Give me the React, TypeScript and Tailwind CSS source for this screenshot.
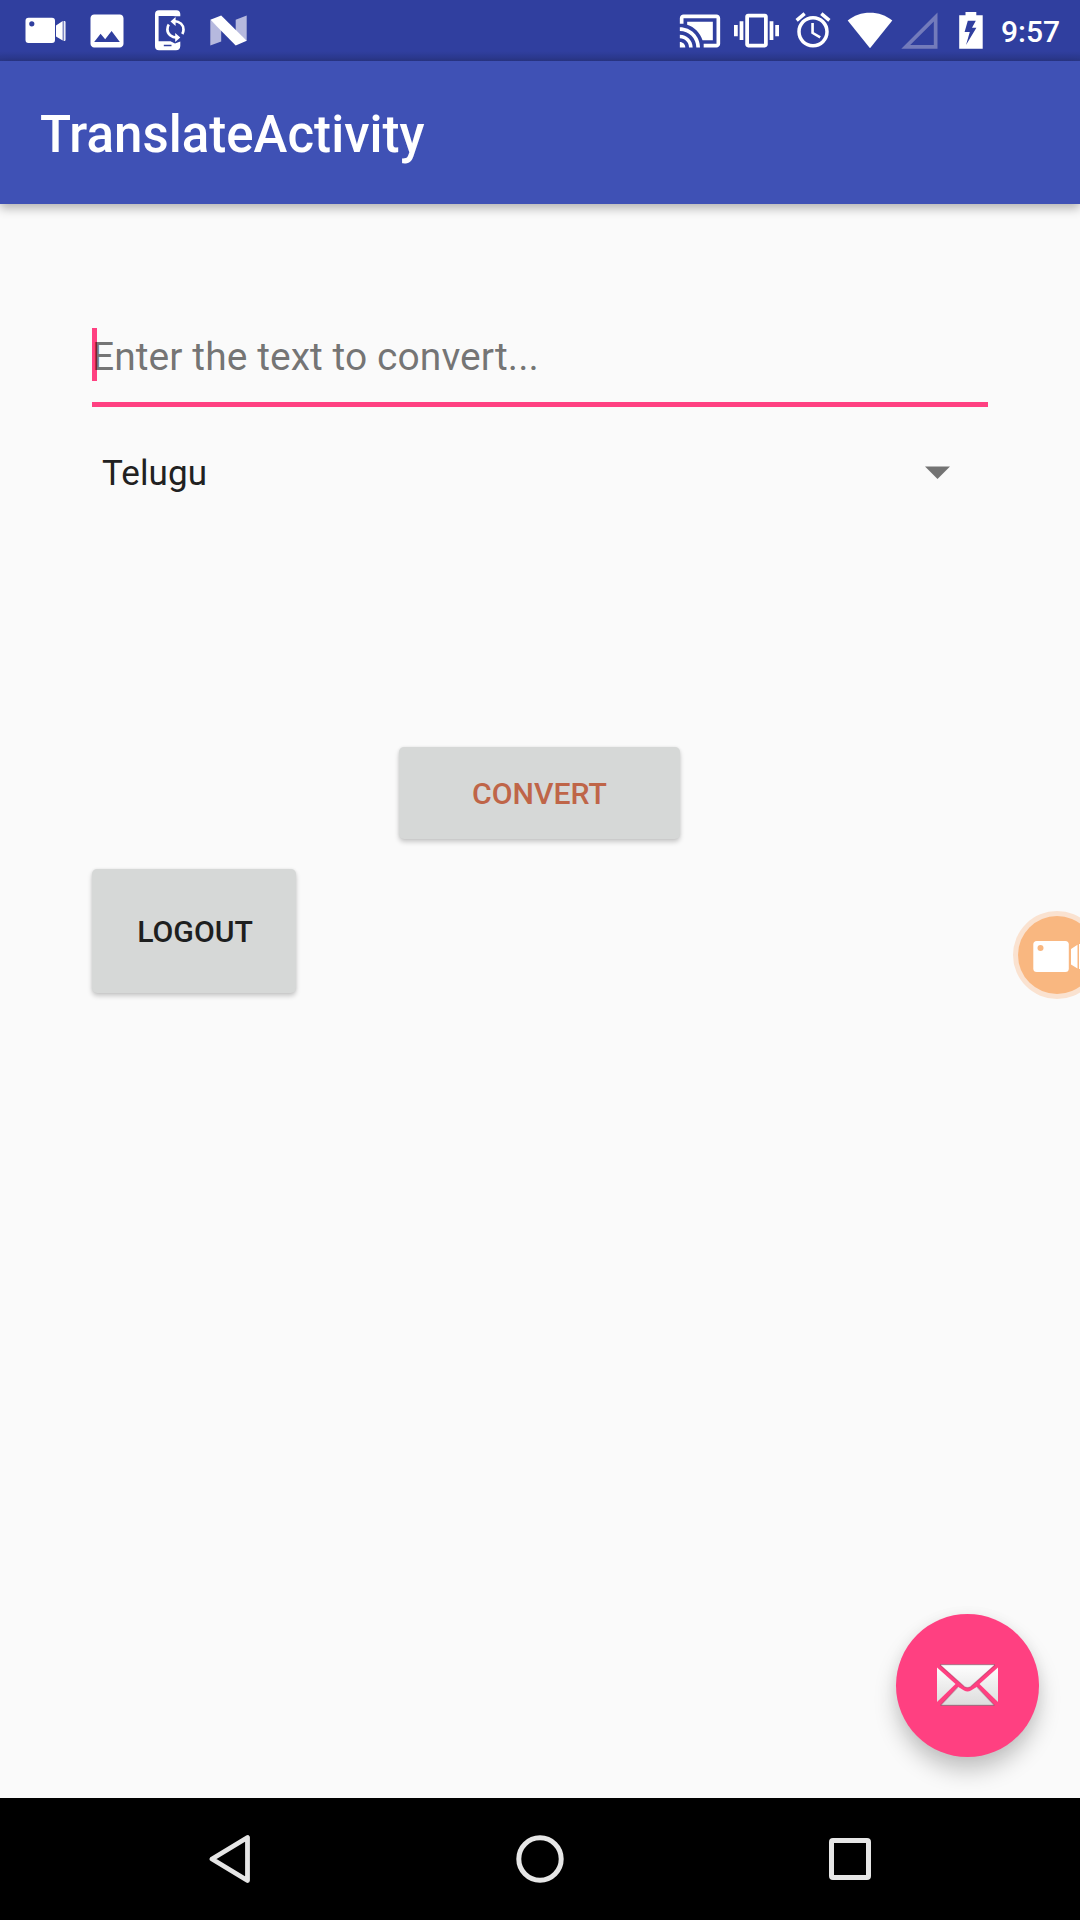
import React from "react";
import { MdAlarm, MdCastConnected, MdImage, MdVibration } from "react-icons/md";

function VideoIcon() {
  return (
    <svg className="ml-[25px] mt-[17px] h-[27px] w-[42px] shrink-0" viewBox="0 0 42 27" fill="#fff">
      <path
        fillRule="evenodd"
        d="M3.500 .8H27a3 3 0 0 1 3 3V23a3 3 0 0 1-3 3H3.500a3 3 0 0 1-3-3V3.800a3 3 0 0 1 3-3ZM6.800 4.200a2.600 2.600 0 1 0 0 5.200a2.600 2.600 0 0 0 0-5.200Z"
      />
      <path d="M31 8.500 37.700 4V23.500L31 19.500ZM38.600 4H39.900V24H38.600ZM40.400 4.500H40.900V23.500H40.400Z" />
    </svg>
  );
}

function PhoneSyncIcon() {
  return (
    <svg className="ml-[26px] mt-[10px] h-[41px] w-[32px] shrink-0" viewBox="0 0 32 41" fill="#fff">
      <path
        fillRule="evenodd"
        d="M4 .2H21.500A4 4 0 0 1 25.300 4V6.300H20.500L18 5.900H3.600V31.200H15.500L20 33.500L25.300 31.500V36A4.500 4.500 0 0 1 21 40.300H4A4 4 0 0 1 0 36.300V4.200A4 4 0 0 1 4 .2ZM8.800 34.800V36.300H16.500V34.800Z"
      />
      <path d="M19 11C25 11.500 28.500 15 28.500 19.700C28.500 21.500 28 22.800 27.300 24" fill="none" stroke="#fff" strokeWidth="2.700" />
      <path d="M13.800 14.500C12.700 16 12.400 17.700 12.400 19.500C12.400 24 16.500 27.400 22 27.600" fill="none" stroke="#fff" strokeWidth="2.700" />
      <path d="M15.500 11.500 20.600 7V16ZM25.300 27.500 20.200 23V32Z" />
    </svg>
  );
}

function NougatIcon() {
  return (
    <svg className="ml-[23px] mt-[15px] h-[31px] w-[37px] shrink-0" viewBox="0 0 37 31">
      <path d="M.3 5V30.500L11.200 26.500V14ZM36.700 .5 25.700 4.800V17L36.700 26Z" fill="#b6b9de" />
      <path d="M.3 4.800 11.200 .5 36.700 25.800 25.700 30.500Z" fill="#fff" />
    </svg>
  );
}

function WifiIcon() {
  return (
    <svg className="ml-[13px] mt-[12px] h-[37px] w-[46px] shrink-0" viewBox="0 0 46 37" fill="#fff">
      <path d="M23 36.300.7 8.500C7 3.300 14.500.7 23 .7S39 3.300 45.300 8.500Z" />
    </svg>
  );
}

function SignalIcon() {
  return (
    <svg className="ml-[8px] mt-[12px] h-[37px] w-[37px] shrink-0" viewBox="0 0 37 37" fill="#737bbb">
      <path fillRule="evenodd" d="M36.500 .5V36.700H.3ZM32.800 9.400V33H9.200Z" />
    </svg>
  );
}

function BatteryIcon() {
  return (
    <svg className="ml-[21px] mt-[12px] h-[37px] w-[24px] shrink-0" viewBox="0 0 24 37">
      <path d="M6.500 0H17.300V3.300H23.700V36.700H.2V3.300H6.500Z" fill="#fff" />
      <path d="M16.800 8.800H8.800L5.600 19.900H10.800L7 33 17.400 15.800H13Z" fill="#303f9f" />
    </svg>
  );
}

function StatusBar() {
  return (
    <div className="flex h-[61px] items-start bg-[linear-gradient(to_bottom,#303f9f_0,#303f9f_51px,#2a3789_61px)]">
      <VideoIcon />
      <MdImage size={44} color="#fff" className="ml-[17.500px] mt-[8.500px] shrink-0" />
      <PhoneSyncIcon />
      <NougatIcon />
      <div className="flex-1" />
      <MdCastConnected size={44} color="#fff" className="mt-[8.500px] shrink-0" />
      <MdVibration size={45} color="#fff" className="ml-[12px] mt-[8px] shrink-0" />
      <MdAlarm size={42} color="#fff" className="ml-[13px] mt-[9px] shrink-0" />
      <WifiIcon />
      <SignalIcon />
      <BatteryIcon />
      <div className="ml-[18px] mr-[20px] mt-[12px] w-[59px] whitespace-nowrap text-[30px] font-medium leading-[40px] text-white">9:57</div>
    </div>
  );
}

function CaptureBubble() {
  return (
    <div className="absolute left-[1013px] top-[707px] h-[88px] w-[67px] overflow-hidden">
      <svg className="h-[88px] w-[88px]" viewBox="0 0 88 88">
        <circle cx="44" cy="44" r="44" fill="#fae2d0" />
        <circle cx="44" cy="44" r="39" fill="#f9b780" />
        <rect x="20.300" y="30" width="35.500" height="31" rx="3.500" fill="#fff" />
        <circle cx="27.500" cy="37" r="3" fill="#f9b780" />
        <path d="M58 38 64.500 33.700V57.500L58 53.500ZM66 33H70V58H66Z" fill="#fff" />
      </svg>
    </div>
  );
}

function MailButton() {
  return (
    <button className="absolute bottom-[41px] right-[41px] flex h-[143px] w-[143px] items-center justify-center rounded-full bg-[#ff4081] shadow-[0_14px_22px_rgba(0,0,0,0.21),0_1px_14px_rgba(0,0,0,0.05)]">
      <svg className="mt-[-1px] h-[42px] w-[61px]" viewBox="0 0 61 42">
        <defs>
          <linearGradient id="paper" x1="0" y1="0" x2="0" y2="42" gradientUnits="userSpaceOnUse">
            <stop offset="0" stopColor="#fff" />
            <stop offset="1" stopColor="#dcdcdc" />
          </linearGradient>
        </defs>
        <g fill="url(#paper)">
          <path d="M3 .5H58L34 22.200Q30.500 25 27 22.200Z" />
          <path d="M0 3.500 18.500 20 0 38Z" />
          <path d="M61 3.500 42.500 20 61 38Z" />
          <path d="M3.500 41.500 21 22.800L27 26.500Q30.500 28.300 34 26.500L40 22.800L57.500 41.500Z" />
        </g>
        <path d="M3.500 41.300H57.500M3 .6H58" stroke="#000" strokeOpacity=".28" strokeWidth="1.200" />
        <path d="M3 1 27 22.200Q30.500 25 34 22.200L58 1M4 41 21 23M57 41 40 23" fill="none" stroke="#803050" strokeOpacity=".3" strokeWidth="1.200" />
      </svg>
    </button>
  );
}

const raised =
  "flex items-center justify-center rounded-[5px] bg-[#d6d8d7] pt-[2px] text-[30.200px] font-medium leading-[36px] shadow-[0_3px_5px_rgba(0,0,0,0.2),0_0_3px_rgba(0,0,0,0.07)]";

export default function App() {
  return (
    <div className="flex h-[1920px] w-[1080px] flex-col overflow-hidden bg-[#fafafa] font-[Roboto,sans-serif]">
      <StatusBar />
      <header className="relative z-10 flex h-[143px] shrink-0 items-center bg-[#3f51b5] pl-[40px] pt-[5px] shadow-[0_4px_10px_rgba(0,0,0,0.3)]">
        <h1 className="whitespace-nowrap text-[51px] font-medium leading-[60px] tracking-[0.03px] text-white">TranslateActivity</h1>
      </header>

      <main className="relative flex flex-1 flex-col px-[92px] pt-[124px]">
        <div className="flex h-[79px] items-start border-b-[5px] border-[#ff4081]">
          <div className="h-[53px] w-[5px] bg-[#ff4081]" />
          <div className="relative ml-[-5px] mt-[3px] whitespace-nowrap text-[39px] leading-[53px] tracking-[0.05px] text-black/55">Enter the text to convert...</div>
        </div>
        <div className="mt-[39px] flex h-[52px] items-center justify-between pl-[10px] pr-[38px]">
          <span className="pt-[4px] text-[35px] leading-[52px] tracking-[0.1px] text-[#212121]">Telugu</span>
          <svg className="h-[13px] w-[25px]" viewBox="0 0 25 13">
            <path d="M0 .5H25L12.500 13Z" fill="#737373" />
          </svg>
        </div>
        <button className={`${raised} ml-[307px] mt-[249px] h-[92px] w-[281px] text-[#bf6548]`}>CONVERT</button>
        <button className={`${raised} mt-[30px] h-[124px] w-[204px] pl-[2px] text-[#1e1f1f]`}>LOGOUT</button>
        <CaptureBubble />
        <MailButton />
      </main>

      <nav className="relative z-10 flex h-[122px] shrink-0 items-center bg-black pl-[209px]">
        <svg className="h-[50px] w-[42px]" viewBox="0 0 42 50">
          <path d="M38.500 3.500V46.500L3 25Z" fill="none" stroke="#e6e6e6" strokeWidth="4.800" strokeLinejoin="round" />
        </svg>
        <svg className="ml-[265px] h-[48px] w-[48px]" viewBox="0 0 48 48">
          <circle cx="24" cy="24" r="21.200" fill="none" stroke="#e6e6e6" strokeWidth="5" />
        </svg>
        <svg className="ml-[265px] h-[42px] w-[42px]" viewBox="0 0 42 42">
          <rect x="2.500" y="2.500" width="37" height="37" rx="1.500" fill="none" stroke="#e6e6e6" strokeWidth="5" />
        </svg>
      </nav>
    </div>
  );
}
